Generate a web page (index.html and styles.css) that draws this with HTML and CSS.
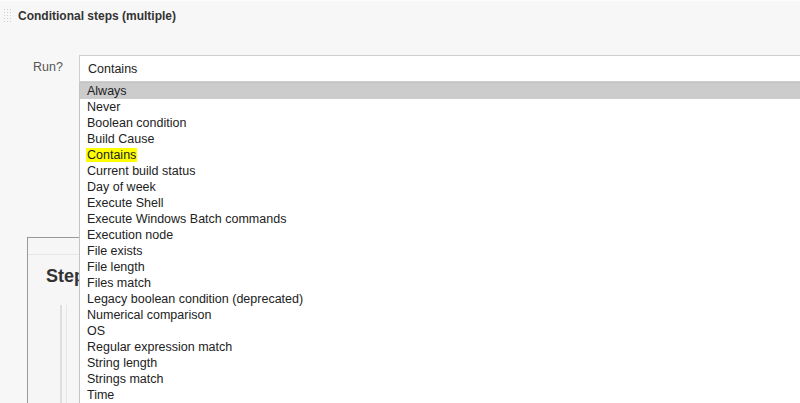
FILE: index.html
```html
<!DOCTYPE html>
<html>
<head>
<meta charset="utf-8">
<link rel="stylesheet" href="styles.css">
</head>
<body>
<div class="page">
  <div class="section-head">
    <span class="grip"></span>
    <span class="title">Conditional steps (multiple)</span>
  </div>
  <div class="run-row">
    <label class="run-label">Run?</label>
    <div class="select-wrap">
      <div class="select">Contains</div>
      <ul class="dropdown">
        <li class="opt sel">Always</li>
        <li class="opt">Never</li>
        <li class="opt">Boolean condition</li>
        <li class="opt">Build Cause</li>
        <li class="opt"><span class="hl">Contains</span></li>
        <li class="opt">Current build status</li>
        <li class="opt">Day of week</li>
        <li class="opt">Execute Shell</li>
        <li class="opt">Execute Windows Batch commands</li>
        <li class="opt">Execution node</li>
        <li class="opt">File exists</li>
        <li class="opt">File length</li>
        <li class="opt">Files match</li>
        <li class="opt">Legacy boolean condition (deprecated)</li>
        <li class="opt">Numerical comparison</li>
        <li class="opt">OS</li>
        <li class="opt">Regular expression match</li>
        <li class="opt">String length</li>
        <li class="opt">Strings match</li>
        <li class="opt">Time</li>
      </ul>
    </div>
  </div>
  <div class="steps-box">
    <div class="steps-inner">
      <div class="steps-title">Step</div>
      <div class="steps-body">
        <div class="steps-col"></div>
      </div>
    </div>
  </div>
</div>
</body>
</html>
```

FILE: styles.css
```css
html, body {
  margin: 0;
  padding: 0;
}
body {
  width: 800px;
  height: 403px;
  overflow: hidden;
  background: #f7f7f7;
  font-family: "Liberation Sans", Arial, sans-serif;
  color: #333;
}
.page {
  position: relative;
  height: 402px;
  overflow: hidden;
  border-top: 1px solid #fdfdfd;
}
.section-head {
  display: flex;
  align-items: center;
  height: 30px;
  padding-left: 3px;
}
.grip {
  width: 9px;
  height: 16px;
  margin-right: 6px;
  background-image: radial-gradient(circle, #cfcfcf 0.8px, transparent 1px);
  background-size: 3px 3px;
}
.title {
  font-size: 12px;
  font-weight: bold;
  color: #333;
}
.run-row {
  display: flex;
  align-items: flex-start;
  margin-top: 24px;
}
.run-label {
  width: 46px;
  padding-left: 33px;
  font-size: 12.5px;
  color: #555;
  padding-top: 5px;
}
.select-wrap {
  position: relative;
  flex: 1;
}
.select {
  height: 25px;
  line-height: 26px;
  background: #fff;
  border: 1px solid #cfcfcf;
  border-right: none;
  padding-left: 8px;
  font-size: 12.5px;
  color: #222;
}
.dropdown {
  position: absolute;
  left: 0;
  right: 0;
  top: 27px;
  height: 320px;
  overflow: hidden;
  margin: 0;
  padding: 0;
  list-style: none;
  background: #fff;
  border: 1px solid #c4c4c4;
  border-right: none;
  z-index: 5;
}
.opt {
  height: 16px;
  line-height: 17px;
  padding-left: 7px;
  font-size: 12.5px;
  color: #222;
  white-space: nowrap;
}
.opt.sel {
  background: #cccccc;
}
.hl {
  background: #ffff00;
  padding: 0 1px;
  margin-left: -1px;
}
.steps-box {
  margin: 155px 0 0 27px;
  border: 1px solid #999;
  border-right: none;
  border-bottom: none;
  height: 200px;
  background: #f6f6f6;
}
.steps-inner {
  border-top: 1px solid #e6e6e6;
  margin-top: 16px;
  padding: 10px 0 0 18px;
}
.steps-title {
  font-size: 18px;
  font-weight: bold;
  color: #333;
  line-height: 22px;
}
.steps-body {
  margin-top: 18px;
  padding-left: 14px;
}
.steps-col {
  width: 4px;
  height: 120px;
  border-left: 2px solid #dedede;
  border-right: 1px solid #e6e6e6;
}
```
